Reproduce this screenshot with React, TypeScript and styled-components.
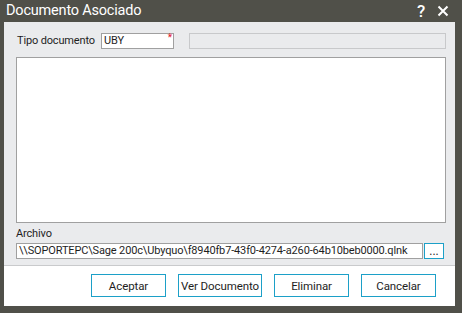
import React from 'react';
import styled, { createGlobalStyle } from 'styled-components';

const GlobalStyle = createGlobalStyle`
  html, body {
    margin: 0;
    padding: 0;
    background: #505049;
  }
  body {
    font-family: Roboto, 'Liberation Sans', sans-serif;
    font-size: 11px;
    letter-spacing: -0.15px;
    color: #1e1e1e;
  }
`;

const Window = styled.div`
  width: 462px;
  height: 313px;
  box-sizing: border-box;
  background-color: #505049;
  padding: 0 7px 7px 4px;
  display: flex;
  flex-direction: column;
`;

const TitleBar = styled.div`
  height: 22px;
  display: flex;
  align-items: center;
  padding-left: 2px;
  color: #ffffff;
`;

const Title = styled.span`
  font-size: 14.5px;
  line-height: 22px;
  letter-spacing: -0.2px;
`;

const TitleButtons = styled.div`
  margin-left: auto;
  display: flex;
  align-items: center;
  gap: 12px;
  padding-right: 6px;
`;

const HelpGlyph = styled.span`
  font-size: 17px;
  font-weight: 500;
  line-height: 22px;
`;

const Panel = styled.div`
  background-color: #eaebed;
  padding: 11px 9px 6px 12px;
  border-bottom: 1px solid #c9cacc;
  display: flex;
  flex-direction: column;
`;

const FieldRow = styled.div`
  display: flex;
  align-items: center;
  height: 16px;
`;

const Label = styled.span`
  width: 85px;
  flex: none;
  padding-left: 1px;
  box-sizing: border-box;
  line-height: 16px;
  white-space: nowrap;
`;

const TextBox = styled.div<{ $width?: number; $disabled?: boolean }>`
  position: relative;
  box-sizing: border-box;
  height: 16px;
  min-width: 0;
  width: ${(p) => (p.$width ? `${p.$width}px` : 'auto')};
  flex: ${(p) => (p.$width ? 'none' : '1')};
  border: 1px solid ${(p) => (p.$disabled ? '#c8c9cb' : '#a0a0a0')};
  background-color: ${(p) => (p.$disabled ? '#eaebed' : '#ffffff')};
  padding-left: 2px;
  line-height: 14px;
  white-space: nowrap;
`;

const Required = styled.span`
  position: absolute;
  right: 1px;
  top: -1px;
  color: #e0102a;
  font-size: 10px;
  line-height: 10px;
`;

const Spacer = styled.div`
  width: 15px;
  flex: none;
`;

const ListBox = styled.div`
  margin-top: 8px;
  height: 166px;
  box-sizing: border-box;
  border: 1px solid #a0a0a0;
  background-color: #ffffff;
`;

const FileLabel = styled.div`
  margin-top: 3px;
  height: 17px;
  line-height: 16px;
`;

const FileRow = styled.div`
  display: flex;
  align-items: center;
  gap: 1px;
  padding-right: 2px;
`;

const BrowseButton = styled.button`
  width: 20px;
  height: 16px;
  flex: none;
  box-sizing: border-box;
  border: 1px solid #1ca0c8;
  background-color: #ffffff;
  padding: 0;
  font-family: inherit;
  font-size: 12px;
  line-height: 10px;
  color: #1e1e1e;
`;

const Footer = styled.div`
  flex: 1;
  background-color: #ffffff;
  display: flex;
  justify-content: flex-end;
  align-items: flex-start;
  gap: 12px;
  padding: 8px 19px 0 0;
`;

const DialogButton = styled.button<{ $width: number }>`
  width: ${(p) => p.$width}px;
  height: 23px;
  box-sizing: border-box;
  border: 1px solid #1ca0c8;
  background-color: #ffffff;
  font-family: inherit;
  font-size: 11.5px;
  letter-spacing: -0.1px;
  color: #1e1e1e;
  padding: 0;
  white-space: nowrap;
`;

const CloseIcon = () => (
  <svg width="12" height="12" viewBox="0 0 12 12">
    <path d="M1.5 1.5 L10.5 10.5 M10.5 1.5 L1.5 10.5" stroke="#ffffff" strokeWidth="2" />
  </svg>
);

export default function App() {
  return (
    <>
      <GlobalStyle />
      <Window>
        <TitleBar>
          <Title>Documento Asociado</Title>
          <TitleButtons>
            <HelpGlyph>?</HelpGlyph>
            <CloseIcon />
          </TitleButtons>
        </TitleBar>
        <Panel>
          <FieldRow>
            <Label>Tipo documento</Label>
            <TextBox $width={73}>
              UBY
              <Required>*</Required>
            </TextBox>
            <Spacer />
            <TextBox $disabled />
          </FieldRow>
          <ListBox />
          <FileLabel>Archivo</FileLabel>
          <FileRow>
            <TextBox>\\SOPORTEPC\Sage 200c\Ubyquo\f8940fb7-43f0-4274-a260-64b10beb0000.qlnk</TextBox>
            <BrowseButton>...</BrowseButton>
          </FileRow>
        </Panel>
        <Footer>
          <DialogButton $width={75}>Aceptar</DialogButton>
          <DialogButton $width={84}>Ver Documento</DialogButton>
          <DialogButton $width={75}>Eliminar</DialogButton>
          <DialogButton $width={75}>Cancelar</DialogButton>
        </Footer>
      </Window>
    </>
  );
}
